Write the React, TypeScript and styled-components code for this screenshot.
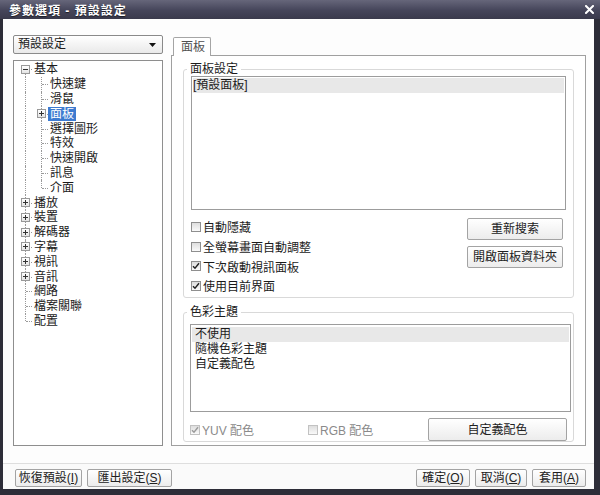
import React from "react";
import styled, { createGlobalStyle } from "styled-components";

const Global = createGlobalStyle`
  html, body { margin: 0; padding: 0; background: #2d2d38; }
  body {
    font-family: "Liberation Sans", "Noto Sans CJK TC", sans-serif;
    font-size: 12px;
    color: #1b1b1b;
  }
  * { box-sizing: border-box; }
`;

const Window = styled.div`
  width: 600px;
  height: 495px;
  display: flex;
  flex-direction: column;
  background: #2d2d38;
`;

const TitleBar = styled.div`
  height: 19px;
  flex: none;
  display: flex;
  align-items: center;
  justify-content: space-between;
  padding: 0 6px 0 9px;
  background: linear-gradient(#66667a, #45455a 55%, #3a3a4c);
  color: #fff;
  font-weight: bold;
  font-size: 12px;
  letter-spacing: 1px;
  text-shadow: 0 1px 1px rgba(0, 0, 0, 0.6);
`;

const Body = styled.div`
  flex: 1;
  margin: 0 6px 6px 3px;
  background: #fdfdfd;
  display: flex;
  flex-direction: column;
  min-height: 0;
`;

const Main = styled.div`
  flex: 1;
  display: flex;
  gap: 8px;
  padding: 16px 8px 17px 10px;
  min-height: 0;
`;

const LeftCol = styled.div`
  width: 150px;
  flex: none;
  display: flex;
  flex-direction: column;
  gap: 6px;
`;

const Dropdown = styled.div`
  height: 19px;
  flex: none;
  border: 1px solid #8a8a8a;
  border-radius: 2px;
  background: linear-gradient(#ffffff, #e9e9e9);
  display: flex;
  align-items: center;
  justify-content: space-between;
  padding: 0 6px 0 4px;
  line-height: 17px;
`;

const TreeBox = styled.div`
  flex: 1;
  border: 1px solid #8e8e8e;
  background: #fff;
  padding: 1px 0 0 4px;
`;

const TreeRow = styled.div`
  height: 14.8px;
  display: flex;
  align-items: center;
`;

type VLine = "full" | "top" | "bottom" | "none";

const Gutter = styled.span<{ $v: VLine; $stub?: boolean }>`
  position: relative;
  flex: none;
  width: 16px;
  height: 100%;
  display: flex;
  align-items: center;
  padding-left: 3px;
  &::before {
    content: "";
    position: absolute;
    left: 7px;
    border-left: 1px dotted #9a9a9a;
    ${({ $v }) =>
      $v === "full"
        ? "top:0;bottom:0;"
        : $v === "top"
        ? "top:0;bottom:50%;"
        : $v === "bottom"
        ? "top:50%;bottom:0;"
        : "display:none;"}
  }
  &::after {
    content: "";
    position: absolute;
    left: 8px;
    right: 2px;
    top: 50%;
    border-top: 1px dotted #9a9a9a;
    display: ${(p) => (p.$stub ? "block" : "none")};
  }
`;

const ExpanderBox = styled.span`
  position: relative;
  z-index: 1;
  width: 9px;
  height: 9px;
  border: 1px solid #999;
  background: linear-gradient(#ffffff, #e4e4e4);
  display: flex;
  align-items: center;
  justify-content: center;
`;

const TreeLabel = styled.span<{ $selected?: boolean }>`
  margin-left: -2px;
  padding: 0 2px;
  height: 14px;
  line-height: 14px;
  white-space: nowrap;
  color: ${(p) => (p.$selected ? "#fff" : "#1b1b1b")};
  background: ${(p) => (p.$selected ? "#3d7bd0" : "transparent")};
`;

const RightCol = styled.div`
  width: 415px;
  flex: none;
  display: flex;
  flex-direction: column;
  padding-top: 2px;
`;

const TabStrip = styled.div`
  height: 18px;
  flex: none;
  display: flex;
  padding-left: 2px;
`;

const Tab = styled.div`
  position: relative;
  z-index: 1;
  height: 19px;
  width: 38px;
  border: 1px solid #a5a5a5;
  border-bottom: none;
  border-radius: 2px 2px 0 0;
  background: #fff;
  color: #505050;
  padding-left: 7px;
  line-height: 18px;
`;

const Panel = styled.div`
  flex: 1;
  border: 1px solid #a0a0a0;
  background: #fff;
  padding: 6px 11px 4px 11px;
  display: flex;
  flex-direction: column;
  gap: 7px;
  min-height: 0;
`;

const Group = styled.fieldset<{ $h?: number; $pl: number; $pr: number }>`
  margin: 0;
  min-width: 0;
  border: 1px solid #d9d9d9;
  border-radius: 3px;
  padding: 0 ${(p) => p.$pr}px 0 ${(p) => p.$pl}px;
  ${(p) => (p.$h ? `height:${p.$h}px; flex:none;` : "flex:1;")}
  display: flex;
  flex-direction: column;
`;

const Legend = styled.legend<{ $ml: number }>`
  padding: 0 3px;
  margin-left: ${(p) => p.$ml}px;
  line-height: 14px;
  height: 14px;
  color: #1b1b1b;
`;

const ListBox = styled.div<{ $h: number; $mt: number; $pt: number; $pl: number }>`
  height: ${(p) => p.$h}px;
  flex: none;
  margin-top: ${(p) => p.$mt}px;
  border: 1px solid #9c9c9c;
  background: #fff;
  padding: ${(p) => p.$pt}px 1px 0 1px;
  & > div {
    padding-left: ${(p) => p.$pl}px;
  }
`;

const ListItem = styled.div<{ $active?: boolean }>`
  height: 15px;
  line-height: 15px;
  white-space: nowrap;
  background: ${(p) => (p.$active ? "#e8e8e8" : "transparent")};
`;

const OptionsRow = styled.div`
  display: flex;
  justify-content: space-between;
  margin-top: 7px;
`;

const CheckCol = styled.div`
  display: flex;
  flex-direction: column;
`;

const CheckLabel = styled.div<{ $disabled?: boolean; $w?: number }>`
  height: 19.7px;
  display: flex;
  align-items: center;
  gap: 2px;
  white-space: nowrap;
  color: ${(p) => (p.$disabled ? "#8a8a8a" : "#1b1b1b")};
  ${(p) => (p.$w ? `width:${p.$w}px; flex:none;` : "")}
`;

const Box = styled.span<{ $disabled?: boolean }>`
  width: 10px;
  height: 10px;
  flex: none;
  border: 1px solid ${(p) => (p.$disabled ? "#c2c2c2" : "#8f8f8f")};
  background: linear-gradient(#dedede, #fafafa);
  display: inline-flex;
  align-items: center;
  justify-content: center;
`;

const ButtonCol = styled.div`
  display: flex;
  flex-direction: column;
  gap: 6px;
  padding-top: 1px;
  margin-right: 3px;
`;

const Button = styled.div<{ $w: number; $h: number }>`
  width: ${(p) => p.$w}px;
  height: ${(p) => p.$h}px;
  flex: none;
  border: 1px solid #a3a3a3;
  border-radius: 2px;
  background: linear-gradient(#ffffff, #ececec);
  display: flex;
  align-items: center;
  justify-content: center;
  color: #222;
  white-space: nowrap;
  line-height: 1;
`;

const BottomRow = styled.div`
  display: flex;
  align-items: center;
  margin-top: 6px;
`;

const Spacer = styled.div`
  flex: 1;
`;

const Footer = styled.div`
  height: 26px;
  flex: none;
  border-top: 1px solid #dedede;
  background: #fafafa;
  display: flex;
  align-items: flex-start;
  gap: 5px;
  padding: 5px 8px 0 12px;
`;

const CloseIcon = () => (
  <svg width="9" height="9" viewBox="0 0 9 9">
    <path d="M1 1 L8 8 M8 1 L1 8" stroke="#fff" strokeWidth="2" strokeLinecap="square" />
  </svg>
);

const Arrow = () => (
  <svg width="7" height="4" viewBox="0 0 7 4">
    <path d="M0 0 H7 L3.5 4 Z" fill="#111" />
  </svg>
);

const Expander = ({ sign }: { sign: "+" | "-" }) => (
  <ExpanderBox>
    <svg width="5" height="5" viewBox="0 0 5 5">
      <path d="M0 2.5 H5" stroke="#333" strokeWidth="1" />
      {sign === "+" && <path d="M2.5 0 V5" stroke="#333" strokeWidth="1" />}
    </svg>
  </ExpanderBox>
);

const Check = ({ checked, disabled }: { checked?: boolean; disabled?: boolean }) => (
  <Box $disabled={disabled}>
    {checked && (
      <svg width="8" height="8" viewBox="0 0 8 8">
        <path
          d="M1 4.2 L3 6.3 L7 1.3"
          fill="none"
          stroke={disabled ? "#9a9a9a" : "#222"}
          strokeWidth="1.4"
        />
      </svg>
    )}
  </Box>
);

type Node = {
  label: string;
  level: 0 | 1;
  exp?: "+" | "-";
  selected?: boolean;
  g0: VLine;
  g1?: VLine;
};

const tree: Node[] = [
  { label: "基本", level: 0, exp: "-", g0: "bottom" },
  { label: "快速鍵", level: 1, g0: "full", g1: "full" },
  { label: "滑鼠", level: 1, g0: "full", g1: "full" },
  { label: "面板", level: 1, g0: "full", g1: "full", exp: "+", selected: true },
  { label: "選擇圖形", level: 1, g0: "full", g1: "full" },
  { label: "特效", level: 1, g0: "full", g1: "full" },
  { label: "快速開啟", level: 1, g0: "full", g1: "full" },
  { label: "訊息", level: 1, g0: "full", g1: "full" },
  { label: "介面", level: 1, g0: "full", g1: "top" },
  { label: "播放", level: 0, exp: "+", g0: "full" },
  { label: "裝置", level: 0, exp: "+", g0: "full" },
  { label: "解碼器", level: 0, exp: "+", g0: "full" },
  { label: "字幕", level: 0, exp: "+", g0: "full" },
  { label: "視訊", level: 0, exp: "+", g0: "full" },
  { label: "音訊", level: 0, exp: "+", g0: "full" },
  { label: "網路", level: 0, g0: "full" },
  { label: "檔案關聯", level: 0, g0: "full" },
  { label: "配置", level: 0, g0: "top" },
];

const options = [
  { label: "自動隱藏", checked: false },
  { label: "全螢幕畫面自動調整", checked: false },
  { label: "下次啟動視訊面板", checked: true },
  { label: "使用目前界面", checked: true },
];

export default function App() {
  return (
    <>
      <Global />
      <Window>
        <TitleBar>
          <span>參數選項 - 預設設定</span>
          <CloseIcon />
        </TitleBar>
        <Body>
          <Main>
            <LeftCol>
              <Dropdown>
                <span>預設設定</span>
                <Arrow />
              </Dropdown>
              <TreeBox>
                {tree.map((n) => (
                  <TreeRow key={n.label}>
                    <Gutter $v={n.g0} $stub={n.level === 0}>
                      {n.level === 0 && n.exp && <Expander sign={n.exp} />}
                    </Gutter>
                    {n.level === 1 && (
                      <Gutter $v={n.g1 ?? "full"} $stub>
                        {n.exp && <Expander sign={n.exp} />}
                      </Gutter>
                    )}
                    <TreeLabel $selected={n.selected}>{n.label}</TreeLabel>
                  </TreeRow>
                ))}
              </TreeBox>
            </LeftCol>
            <RightCol>
              <TabStrip>
                <Tab>面板</Tab>
              </TabStrip>
              <Panel>
                <Group $h={236} $pl={7} $pr={7}>
                  <Legend $ml={-4}>面板設定</Legend>
                  <ListBox $h={134} $mt={0} $pt={1} $pl={0}>
                    <ListItem $active>[預設面板]</ListItem>
                  </ListBox>
                  <OptionsRow>
                    <CheckCol>
                      {options.map((o) => (
                        <CheckLabel key={o.label}>
                          <Check checked={o.checked} />
                          <span>{o.label}</span>
                        </CheckLabel>
                      ))}
                    </CheckCol>
                    <ButtonCol>
                      <Button $w={96} $h={22}>重新搜索</Button>
                      <Button $w={96} $h={22}>開啟面板資料夾</Button>
                    </ButtonCol>
                  </OptionsRow>
                </Group>
                <Group $pl={6} $pr={2}>
                  <Legend $ml={-3}>色彩主題</Legend>
                  <ListBox $h={88} $mt={5} $pt={2} $pl={3}>
                    <ListItem $active>不使用</ListItem>
                    <ListItem>隨機色彩主題</ListItem>
                    <ListItem>自定義配色</ListItem>
                  </ListBox>
                  <BottomRow>
                    <CheckLabel $disabled $w={118}>
                      <Check checked disabled />
                      <span>YUV 配色</span>
                    </CheckLabel>
                    <CheckLabel $disabled>
                      <Check disabled />
                      <span>RGB 配色</span>
                    </CheckLabel>
                    <Spacer />
                    <Button $w={139} $h={23} style={{ marginRight: 4 }}>
                      自定義配色
                    </Button>
                  </BottomRow>
                </Group>
              </Panel>
            </RightCol>
          </Main>
          <Footer>
            <Button $w={67} $h={18}>
              恢復預設(<u>I</u>)
            </Button>
            <Button $w={85} $h={18}>
              匯出設定(<u>S</u>)
            </Button>
            <Spacer />
            <Button $w={54} $h={18}>
              確定(<u>O</u>)
            </Button>
            <Button $w={52} $h={18}>
              取消(<u>C</u>)
            </Button>
            <Button $w={54} $h={18}>
              套用(<u>A</u>)
            </Button>
          </Footer>
        </Body>
      </Window>
    </>
  );
}
